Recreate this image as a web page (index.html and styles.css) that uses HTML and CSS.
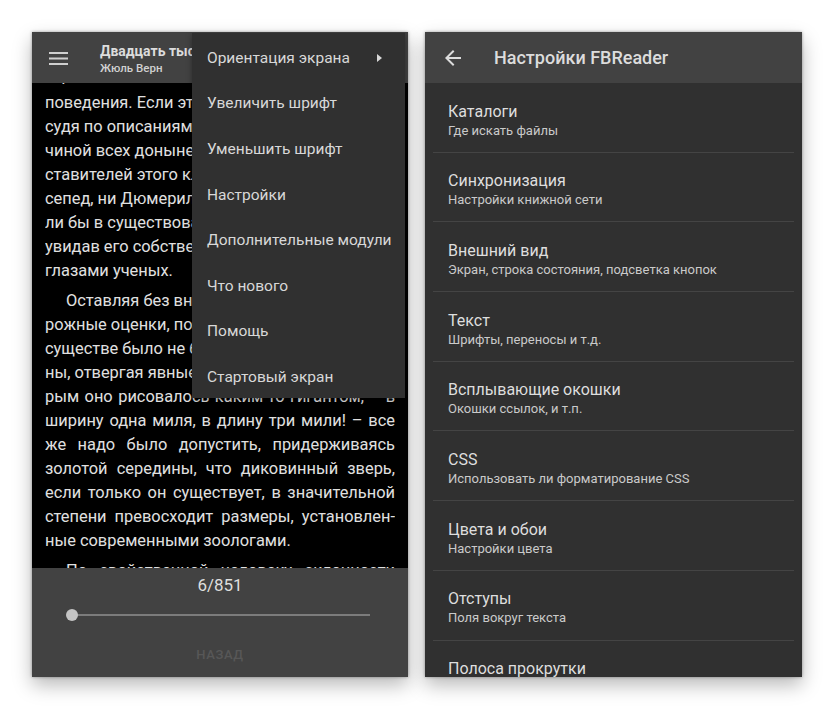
FILE: index.html
```html
<!DOCTYPE html>
<html lang="ru">
<head>
<meta charset="utf-8">
<title>FBReader</title>
<link rel="stylesheet" href="styles.css">
</head>
<body>
<div class="stage">
  <section class="phone reader">
    <header class="bar reader-bar">
      <svg class="burger" width="19" height="13" viewBox="0 0 19 13"><rect x="0" y="0" width="19" height="2"/><rect x="0" y="5.5" width="19" height="2"/><rect x="0" y="11" width="19" height="2"/></svg>
      <div class="book">
        <div class="book-title">Двадцать тысяч лье под водой</div>
        <div class="book-author">Жюль Верн</div>
      </div>
    </header>
    <div class="page">
      <div class="text">
        <div class="line cut peek">странного и необъяснимого его образа</div>
        <div class="line cut">поведения. Если это китообразное, то,</div>
        <div class="line cut">судя по описаниям, оно превосходило ве-</div>
        <div class="line cut">чиной всех доныне известных пред-</div>
        <div class="line cut">ставителей этого класса. Ни Кювье, ни Ла-</div>
        <div class="line cut">сепед, ни Дюмериль, ни Катрфаж не допусти-</div>
        <div class="line cut">ли бы в существование такого чудовища,</div>
        <div class="line cut">увидав его собственными глазами, или</div>
        <div class="line end">глазами ученых.</div>
        <div class="line cut para">Оставляя без внимания чересчур осто-</div>
        <div class="line cut">рожные оценки, по которым длина его по</div>
        <div class="line cut">существе было не больше двухсот саже-</div>
        <div class="line cut">ны, отвергая явные преувеличения, по кото-</div>
        <div class="line">рым оно рисовалось каким-то гигантом, – в</div>
        <div class="line">ширину одна миля, в длину три мили! – все</div>
        <div class="line">же надо было допустить, придерживаясь</div>
        <div class="line">золотой середины, что диковинный зверь,</div>
        <div class="line">если только он существует, в значительной</div>
        <div class="line">степени превосходит размеры, установлен-</div>
        <div class="line end">ные современными зоологами.</div>
        <div class="line para">По свойственной человеку склонности</div>
      </div>
    </div>
    <footer class="nav">
      <div class="pages">6/851</div>
      <div class="slider"><span class="thumb"></span></div>
      <div class="back">НАЗАД</div>
    </footer>
    <ul class="menu">
      <li class="menu-item has-sub">Ориентация экрана<svg class="sub" width="5" height="8" viewBox="0 0 5 8"><path d="M0 0L5 4L0 8Z"/></svg></li>
      <li class="menu-item">Увеличить шрифт</li>
      <li class="menu-item">Уменьшить шрифт</li>
      <li class="menu-item">Настройки</li>
      <li class="menu-item">Дополнительные модули</li>
      <li class="menu-item">Что нового</li>
      <li class="menu-item">Помощь</li>
      <li class="menu-item">Стартовый экран</li>
    </ul>
  </section>

  <section class="phone settings">
    <header class="bar settings-bar">
      <svg class="arrow" width="24" height="24" viewBox="0 0 24 24"><path d="M20 11H7.83l5.59-5.59L12 4l-8 8 8 8 1.41-1.41L7.83 13H20v-2z"/></svg>
      <h1 class="settings-title">Настройки FBReader</h1>
    </header>
    <ul class="prefs">
      <li class="pref"><div class="pref-title">Каталоги</div><div class="pref-sub">Где искать файлы</div></li>
      <li class="pref"><div class="pref-title">Синхронизация</div><div class="pref-sub">Настройки книжной сети</div></li>
      <li class="pref"><div class="pref-title">Внешний вид</div><div class="pref-sub">Экран, строка состояния, подсветка кнопок</div></li>
      <li class="pref"><div class="pref-title">Текст</div><div class="pref-sub">Шрифты, переносы и т.д.</div></li>
      <li class="pref"><div class="pref-title">Всплывающие окошки</div><div class="pref-sub">Окошки ссылок, и т.п.</div></li>
      <li class="pref"><div class="pref-title">CSS</div><div class="pref-sub">Использовать ли форматирование CSS</div></li>
      <li class="pref"><div class="pref-title">Цвета и обои</div><div class="pref-sub">Настройки цвета</div></li>
      <li class="pref"><div class="pref-title">Отступы</div><div class="pref-sub">Поля вокруг текста</div></li>
      <li class="pref"><div class="pref-title">Полоса прокрутки</div><div class="pref-sub">Показывать ли полосу</div></li>
    </ul>
  </section>
</div>
</body>
</html>
```

FILE: styles.css
```css
* { box-sizing: border-box; }
html, body { margin: 0; padding: 0; background: #ffffff; }
body { font-family: Roboto, "Noto Sans", "Liberation Sans", sans-serif; width: 834px; height: 710px; overflow: hidden; }

.stage { display: flex; gap: 17px; padding: 32px 0 0 32px; }

.phone {
  position: relative;
  height: 645px;
  overflow: hidden;
  display: flex;
  flex-direction: column;
  box-shadow: 0 0 3px rgba(0,0,0,0.35), 0 8px 18px rgba(0,0,0,0.28);
}
.reader { width: 376px; background: #000; }
.settings { width: 377px; background: #303030; }

.bar { height: 51px; flex: none; background: #424242; display: flex; align-items: center; position: relative; z-index: 2; }

/* reader bar */
.reader-bar { padding-left: 17px; gap: 32px; }
.burger { fill: #cfcfcf; flex: none; margin-top: 1px; }
.book { display: flex; flex-direction: column; white-space: nowrap; padding-top: 3px; }
.book-title { font-size: 14px; font-weight: 700; color: #dcdcdc; line-height: 18px; }
.book-author { font-size: 11.5px; font-weight: 500; color: #d0d0d0; line-height: 16px; }

/* page text */
.page { flex: 1; overflow: hidden; padding: 0 13px; position: relative; z-index: 1; }
.text { margin-top: -16px; color: #e0e0e0; font-size: 16.4px; }
.line { height: 24px; line-height: 24px; overflow: hidden; text-align: justify; text-align-last: justify; }
.line.peek { line-height: 18px; }
.line.cut { white-space: nowrap; text-align: left; text-align-last: left; }
.line.end { text-align-last: left; }
.line.para { text-indent: 21px; margin-top: 6px; }

/* bottom navigation */
.nav { height: 109px; flex: none; background: #424242; display: flex; flex-direction: column; align-items: center; position: relative; z-index: 2; }
.pages { margin-top: 6px; font-size: 17px; line-height: 22px; color: #dedede; }
.slider { position: relative; align-self: flex-start; width: 298px; height: 2px; background: #7c7c7c; margin: 18px 0 0 40px; }
.thumb { position: absolute; left: -6px; top: -5px; width: 12px; height: 12px; border-radius: 50%; background: #c4c4c4; }
.back { margin-top: 31px; font-size: 13px; letter-spacing: 0.6px; color: #575757; font-weight: 500; }

/* overflow menu */
.menu {
  position: absolute; left: 160px; top: 1px; width: 213px; height: 365px;
  margin: 0; padding: 2px 0 0; list-style: none;
  background: #303030; z-index: 5;
  box-shadow: 0 2px 6px rgba(0,0,0,0.35);
}
.menu-item { height: 45.6px; display: flex; align-items: center; padding-left: 15px; font-size: 15.5px; color: #d8d8d8; white-space: nowrap; }
.has-sub { justify-content: space-between; padding-right: 23px; }
.sub { fill: #d8d8d8; }

/* settings */
.settings-bar { padding-left: 16px; gap: 29px; }
.arrow { fill: #dcdcdc; flex: none; }
.settings-title { margin: 0; font-size: 18px; font-weight: 500; color: #dcdcdc; }
.prefs { list-style: none; margin: 0; padding: 0 8px; }
.pref { height: 69.7px; border-bottom: 1px solid #444444; padding: 18.5px 0 0 15px; }
.pref-title { font-size: 16px; line-height: 20px; color: #dedede; }
.pref-sub { font-size: 13px; line-height: 18px; color: #cacaca; }
```
